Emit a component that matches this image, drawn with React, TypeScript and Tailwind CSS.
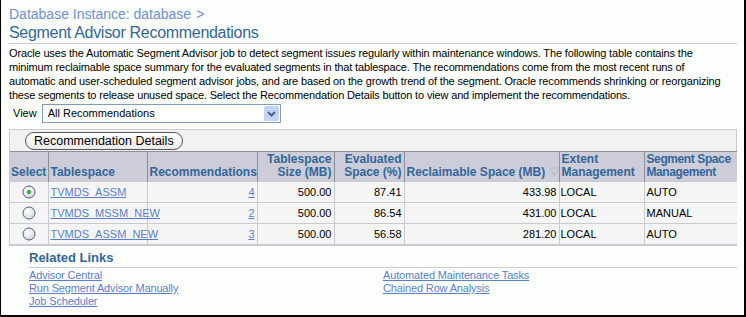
import React from "react";

const F = { fontFamily: '"Liberation Sans", Arial, sans-serif' };

function Radio({ checked }: { checked?: boolean }) {
  return (
    <svg width="14" height="14" viewBox="0 0 14 14">
      <defs>
        <radialGradient id="rg" cx="0.4" cy="0.35" r="0.7">
          <stop offset="0" stopColor="#ffffff" />
          <stop offset="1" stopColor="#d4d6dc" />
        </radialGradient>
      </defs>
      <circle cx="7" cy="7" r="6" fill="url(#rg)" stroke="#4a6484" strokeWidth="1" />
      {checked && <circle cx="7" cy="7" r="2.2" fill="#3fae3f" />}
    </svg>
  );
}

const rows = [
  { ts: "TVMDS_ASSM", rec: "4", size: "500.00", ev: "87.41", recl: "433.98", ext: "LOCAL", seg: "AUTO", checked: true },
  { ts: "TVMDS_MSSM_NEW", rec: "2", size: "500.00", ev: "86.54", recl: "431.00", ext: "LOCAL", seg: "MANUAL" },
  { ts: "TVMDS_ASSM_NEW", rec: "3", size: "500.00", ev: "56.58", recl: "281.20", ext: "LOCAL", seg: "AUTO" },
];

export default function App() {
  return (
    <div
      className="w-[746px] h-[317px] bg-[#fcfffc] border-l border-r-2 border-b-2 border-black box-border overflow-hidden text-black"
      style={F}
    >
      <div className="pl-[8px] pr-[8px] pt-[6px]">
        <div className="text-[14px] leading-[17px] text-[#6e8fd0] flex gap-[5px]">
          <span>Database Instance: database</span>
          <span>&gt;</span>
        </div>
        <div className="text-[16px] tracking-[-0.3px] leading-[19px] text-[#336699] border-b border-[#c9cbcf] w-[728px] pb-[1px]">
          Segment Advisor Recommendations
        </div>
        <p className="text-[11px] tracking-[-0.15px] leading-[14px] mt-[2px] whitespace-nowrap">
          Oracle uses the Automatic Segment Advisor job to detect segment issues regularly within maintenance windows. The following table contains the
          <br />
          minimum reclaimable space summary for the evaluated segments in that tablespace. The recommendations come from the most recent runs of
          <br />
          automatic and user-scheduled segment advisor jobs, and are based on the growth trend of the segment. Oracle recommends shrinking or reorganizing
          <br />
          these segments to release unused space. Select the Recommendation Details button to view and implement the recommendations.
        </p>
        <div className="flex items-center mt-[2px] ml-[4px] gap-[5px] text-[11px]">
          <span>View</span>
          <div className="w-[239px] h-[19px] border border-[#7f9db9] bg-white flex items-center justify-between pl-[5px] pr-[1px]">
            <span>All Recommendations</span>
            <div className="w-[15px] h-[15px] bg-[#c3d3f8] rounded-[2px] flex items-center justify-center">
              <svg width="9" height="6" viewBox="0 0 9 6">
                <path d="M1 1 L4.5 4.5 L8 1" fill="none" stroke="#4d6185" strokeWidth="2" />
              </svg>
            </div>
          </div>
        </div>

        <div className="w-[728px] mt-[6px] border border-[#c9cbd3] bg-[#f2f2f2]">
          <div className="h-[21px] flex items-center pl-[15px]">
            <div className="h-[18px] px-[8px] border border-[#555] rounded-[9px] bg-gradient-to-b from-white to-[#ebebeb] text-[12.5px] leading-[16px] flex items-center">
              Recommendation Details
            </div>
          </div>
          <table className="border-collapse w-[727px] table-fixed text-[11px]">
            <colgroup>
              <col className="w-[38px]" />
              <col className="w-[99px]" />
              <col className="w-[110px]" />
              <col className="w-[77px]" />
              <col className="w-[70px]" />
              <col className="w-[155px]" />
              <col className="w-[85px]" />
              <col className="w-[93px]" />
            </colgroup>
            <thead>
              <tr className="bg-[#cdcdd9] text-[#336699] text-[12px] leading-[13px] font-bold h-[30px] align-bottom">
                <th className="text-left pl-[1px] pb-[2px] border-t border-[#8e8e96] border-r">Select</th>
                <th className="text-left pl-[2px] pb-[2px] border-t border-r border-[#8e8e96]">Tablespace</th>
                <th className="text-left pl-[2px] pb-[2px] border-t border-r border-[#8e8e96]">Recommendations</th>
                <th className="text-right pr-[2px] pb-[2px] border-t border-r border-[#8e8e96]">Tablespace<br />Size (MB)</th>
                <th className="text-right pr-[2px] pb-[2px] border-t border-r border-[#8e8e96]">Evaluated<br />Space (%)</th>
                <th className="text-left pl-[2px] pb-[2px] border-t border-r border-[#8e8e96] whitespace-nowrap">
                  Reclaimable Space (MB){" "}
                  <svg width="11" height="10" viewBox="0 0 11 10" className="inline-block align-[-1px]">
                    <path d="M1 1 L10 1 L5.5 9 Z" fill="none" stroke="#b8b8c0" strokeWidth="1" />
                  </svg>
                </th>
                <th className="text-left pl-[2px] pb-[2px] border-t border-r border-[#8e8e96]">Extent<br />Management</th>
                <th className="text-left pl-[2px] pb-[2px] border-t border-[#8e8e96] tracking-[-0.4px] whitespace-nowrap">Segment Space<br />Management</th>
              </tr>
            </thead>
            <tbody>
              {rows.map((r) => (
                <tr key={r.ts} className="h-[21px] bg-[#f4f5f4]">
                  <td className="border border-[#c9cbd3] text-center border-l-0 pt-[1px]">
                    <div className="flex justify-center -mt-[2px]"><Radio checked={r.checked} /></div>
                  </td>
                  <td className="border border-[#c9cbd3] pl-[2px]">
                    <a className="text-[#5a7fd0] underline">{r.ts}</a>
                  </td>
                  <td className="border border-[#c9cbd3] text-right pr-[2px]">
                    <a className="text-[#5a7fd0] underline">{r.rec}</a>
                  </td>
                  <td className="border border-[#c9cbd3] text-right pr-[2px]">{r.size}</td>
                  <td className="border border-[#c9cbd3] text-right pr-[2px]">{r.ev}</td>
                  <td className="border border-[#c9cbd3] text-right pr-[2px]">{r.recl}</td>
                  <td className="border border-[#c9cbd3] pl-[1px]">{r.ext}</td>
                  <td className="border border-[#c9cbd3] border-r-0 pl-[2px]">{r.seg}</td>
                </tr>
              ))}
            </tbody>
          </table>
        </div>

        <div className="ml-[20px] mt-[4px] w-[708px]">
          <div className="text-[13px] leading-[16px] font-bold text-[#336699] border-b border-[#c9cbcf] pb-[1px]">
            Related Links
          </div>
          <div className="flex text-[11px] tracking-[-0.15px] leading-[13px] mt-[1px]">
            <div className="w-[354px] flex flex-col items-start">
              <a className="text-[#5a7fd0] underline">Advisor Central</a>
              <a className="text-[#5a7fd0] underline">Run Segment Advisor Manually</a>
              <a className="text-[#5a7fd0] underline">Job Scheduler</a>
            </div>
            <div className="flex flex-col items-start">
              <a className="text-[#5a7fd0] underline">Automated Maintenance Tasks</a>
              <a className="text-[#5a7fd0] underline">Chained Row Analysis</a>
            </div>
          </div>
        </div>
      </div>
    </div>
  );
}
